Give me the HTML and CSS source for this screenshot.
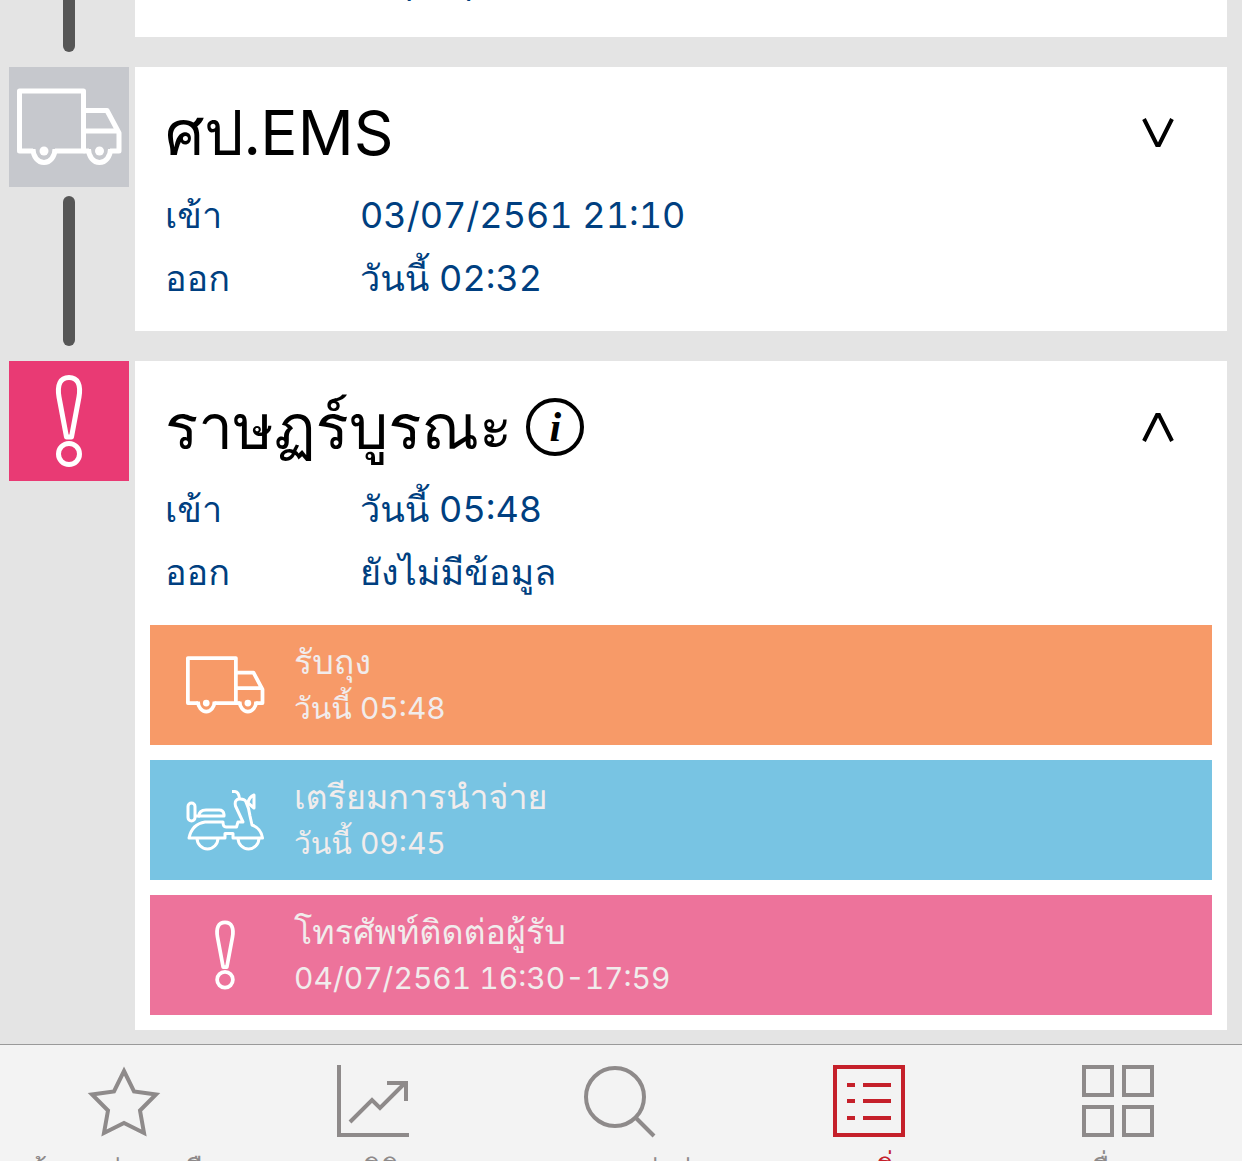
FILE: index.html
```
<!DOCTYPE html>
<html lang="th">
<head>
    <meta charset="UTF-8">
    <meta name="viewport" content="width=device-width, initial-scale=1.0">
    <title>ติดตามสิ่งของ</title>
    <link rel="stylesheet" href="styles.css">
</head>
<body>
    <svg class="sprite" aria-hidden="true">
        <symbol id="truck" viewBox="0 0 120 120">
            <g fill="none" stroke="#fff" stroke-width="5" stroke-linejoin="round">
                <path d="M24 84H10.500V24H74.500V84H46"/>
                <path d="M74.500 43.500H98L110 66V84H101M74.500 64H109M74.500 84H80"/>
                <path d="M24 82a11 13.500 0 0 0 22 0M79.500 82a11 13.500 0 0 0 22 0"/>
            </g>
            <circle cx="35" cy="84" r="4.500" fill="#fff"/>
            <circle cx="90.500" cy="84" r="4.500" fill="#fff"/>
        </symbol>
        <symbol id="alert" viewBox="0 0 120 120">
            <g fill="none" stroke="#fff" stroke-width="5" stroke-linejoin="round">
                <path d="M57.500 76L50 36C48 24 51 16.500 60 16.500S72 24 70 36L62.500 76Z"/>
                <circle cx="60" cy="93" r="10.500"/>
            </g>
        </symbol>
        <symbol id="scooter" viewBox="0 0 90 90">
            <g fill="none" stroke="#fff" stroke-width="3" stroke-linejoin="round">
                <rect x="8" y="28" width="7" height="18" rx="3.500"/>
                <path d="M19 41H44V39.500Q43.500 35 39 35H26Q19 35 19 41Z"/>
                <path d="M15 41H20M9 63Q12 49 25 47H43Q43 52 46 52H56.500L58 47H63L55.500 31Q54 24 60 24Q65 24 66 27Q69 33 70 41L72 50Q81 53 82.500 63H53V58.500H45V63Z"/>
                <path d="M52 16.500H55Q59 17 59.500 24M74 20V33L68 28Q69 22 74 20Z"/>
                <path d="M17 63a10.500 11 0 0 0 21 0M58 63a10.500 11 0 0 0 21 0"/>
            </g>
        </symbol>
    </svg>

    <div class="app">
        <main class="timeline">
            <section class="step">
                <div class="rail">
                    <span class="badge"></span>
                    <span class="line"></span>
                </div>
                <article class="card">
                    <header class="card-head">
                        <h2>หลักสี่</h2>
                    </header>
                    <dl class="times">
                        <dt>เข้า</dt>
                        <dd>03/07/2561 18:20</dd>
                        <dt>ออก</dt>
                        <dd>03/07/2561 20:45</dd>
                    </dl>
                </article>
            </section>

            <section class="step">
                <div class="rail">
                    <span class="badge"><svg><use href="#truck"/></svg></span>
                    <span class="line"></span>
                </div>
                <article class="card">
                    <header class="card-head">
                        <h2>ศป.EMS</h2>
                        <button class="toggle" aria-label="แสดงรายละเอียด">
                            <svg viewBox="0 0 32 30"><path d="M2 1L15 27H17L30 1"/></svg>
                        </button>
                    </header>
                    <dl class="times">
                        <dt>เข้า</dt>
                        <dd>03/07/2561 21:10</dd>
                        <dt>ออก</dt>
                        <dd>วันนี้ 02:32</dd>
                    </dl>
                </article>
            </section>

            <section class="step">
                <div class="rail">
                    <span class="badge badge-alert"><svg><use href="#alert"/></svg></span>
                </div>
                <article class="card card-open">
                    <header class="card-head">
                        <h2>ราษฏร์บูรณะ</h2>
                        <button class="info" aria-label="ข้อมูล"><i>i</i></button>
                        <button class="toggle" aria-label="ซ่อนรายละเอียด">
                            <svg viewBox="0 0 32 30"><path d="M2 29L15 3H17L30 29"/></svg>
                        </button>
                    </header>
                    <dl class="times">
                        <dt>เข้า</dt>
                        <dd>วันนี้ 05:48</dd>
                        <dt>ออก</dt>
                        <dd>ยังไม่มีข้อมูล</dd>
                    </dl>
                    <ul class="events">
                        <li class="event event-pickup">
                            <svg class="event-icon"><use href="#truck"/></svg>
                            <div>
                                <h3>รับถุง</h3>
                                <p>วันนี้ 05:48</p>
                            </div>
                        </li>
                        <li class="event event-prepare">
                            <svg class="event-icon"><use href="#scooter"/></svg>
                            <div>
                                <h3>เตรียมการนำจ่าย</h3>
                                <p>วันนี้ 09:45</p>
                            </div>
                        </li>
                        <li class="event event-call">
                            <svg class="event-icon"><use href="#alert"/></svg>
                            <div>
                                <h3>โทรศัพท์ติดต่อผู้รับ</h3>
                                <p>04/07/2561 16:30-17:59</p>
                            </div>
                        </li>
                    </ul>
                </article>
            </section>
        </main>

        <nav class="tabbar">
            <a class="tab" href="#">
                <svg viewBox="0 0 72 72"><path d="M36 6L46 26.500L68 29.500L52 45.500L56 68L36 58L16 68L20 45.500L4 29.500L26 26.500Z"/></svg>
                <span>ต้นทุนส่งของมือ</span>
            </a>
            <a class="tab" href="#">
                <svg viewBox="0 0 72 72"><path d="M2 0V70H72M13 57L35 35L43 43L68 18M50 18H69V36"/></svg>
                <span>สถิติ</span>
            </a>
            <a class="tab" href="#">
                <svg viewBox="0 0 72 72"><circle cx="30" cy="32" r="29"/><path d="M50 52L69 71"/></svg>
                <span>สอบถามค่าส่ง</span>
            </a>
            <a class="tab tab-active" href="#">
                <svg viewBox="0 0 72 72"><path d="M2 2H70V70H2ZM14 20H22M30 20H58M14 36H22M30 36H58M14 53H22M30 53H58"/></svg>
                <span>รายการสิ่งของ</span>
            </a>
            <a class="tab" href="#">
                <svg viewBox="0 0 72 72"><path d="M2 2H30V30H2ZM42 2H70V30H42ZM2 42H30V70H2ZM42 42H70V70H42Z"/></svg>
                <span>อื่นๆ</span>
            </a>
        </nav>
    </div>
</body>
</html>
```
FILE: styles.css
```
* {
    box-sizing: border-box;
}
body {
    margin: 0;
    font-family: Inter, Thonburi, Loma, "Noto Sans Thai Looped", "Noto Sans Thai", "Noto Sans", sans-serif;
    font-variant-numeric: tabular-nums;
    background-color: #e4e4e4;
    color: #000;
}
h2, h3, p, dl, dd, ul {
    margin: 0;
    padding: 0;
    font-weight: 400;
}
button {
    padding: 0;
    border: none;
    background: none;
    color: inherit;
    cursor: pointer;
}
.sprite {
    position: absolute;
    width: 0;
    height: 0;
}
.app {
    display: flex;
    flex-direction: column;
    height: 100vh;
    overflow: hidden;
}

/* Timeline */
.timeline {
    flex: 1;
    min-height: 0;
    display: flex;
    flex-direction: column;
    justify-content: flex-end;
    gap: 30px;
    padding: 0 15px 14px 9px;
    overflow: hidden;
}
.step {
    display: flex;
    flex: none;
    gap: 6px;
}
.rail {
    display: flex;
    flex-direction: column;
    align-items: center;
    gap: 9px;
    width: 120px;
}
.badge {
    width: 120px;
    height: 120px;
    background-color: #c6c8cd;
}
.badge svg {
    display: block;
    width: 120px;
    height: 120px;
}
.badge-alert {
    background-color: #e93a74;
}
.line {
    flex: 1;
    width: 12px;
    margin-bottom: -15px;
    border-radius: 6px;
    background-color: #565656;
}
.card {
    flex: 1;
    padding: 28px 15px 12px;
    background-color: #fff;
}
.card-open {
    padding-bottom: 15px;
}
.card-head {
    display: flex;
    align-items: center;
    gap: 14px;
    height: 76px;
    padding: 0 38px 0 15px;
}
.card-head h2 {
    font-size: 62px;
    line-height: 76px;
    white-space: nowrap;
}
.info {
    width: 58px;
    height: 58px;
    border: 4px solid #000;
    border-radius: 50%;
    font: italic bold 42px/48px "Liberation Serif", serif;
}
.toggle {
    margin-left: auto;
    width: 32px;
    height: 30px;
}
.toggle svg {
    display: block;
    fill: none;
    stroke: #000;
    stroke-width: 4;
}
.times {
    display: grid;
    grid-template-columns: 195px 1fr;
    padding: 13px 15px 9px;
    font-size: 36px;
    line-height: 63px;
    color: #003f80;
}

/* Events inside an open card */
.events {
    display: flex;
    flex-direction: column;
    gap: 15px;
    margin-top: 12px;
    list-style: none;
}
.event {
    display: flex;
    align-items: center;
    gap: 24px;
    height: 120px;
    padding-left: 30px;
    color: #f1ecec;
}
.event-icon {
    width: 90px;
    height: 90px;
}
.event h3 {
    font-size: 34px;
    line-height: 46px;
}
.event p {
    font-size: 30px;
    line-height: 46px;
}
.event-pickup {
    background-color: #f79a68;
}
.event-prepare {
    background-color: #78c4e3;
}
.event-call {
    background-color: #ed739b;
}

/* Bottom tabs */
.tabbar {
    display: flex;
    flex: none;
    height: 117px;
    border-top: 1px solid #999;
    background-color: #f3f3f3;
    overflow: hidden;
}
.tab {
    display: flex;
    flex: 1;
    flex-direction: column;
    align-items: center;
    gap: 10px;
    padding-top: 20px;
    font-size: 28px;
    line-height: 44px;
    white-space: nowrap;
    text-decoration: none;
    color: #8e8a8a;
}
.tab svg {
    flex: none;
    width: 72px;
    height: 72px;
    overflow: visible;
    fill: none;
    stroke: currentColor;
    stroke-width: 4;
}
.tab-active {
    color: #c5202a;
}
```
